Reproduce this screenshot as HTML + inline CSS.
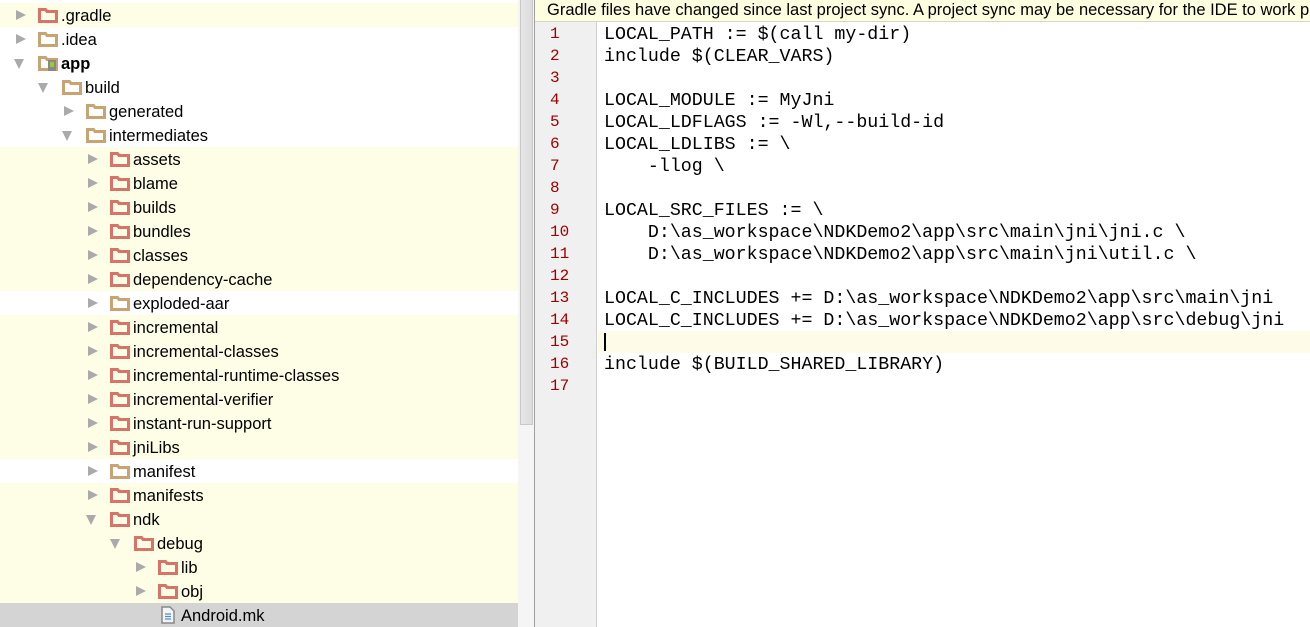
<!DOCTYPE html>
<html><head><meta charset="utf-8"><style>
*{margin:0;padding:0;box-sizing:border-box}
body{width:1310px;height:627px;overflow:hidden;background:#fff;position:relative;font-family:"Liberation Sans",sans-serif}
#tree{position:absolute;left:0;top:0;width:518px;height:627px;background:#fff}
.row{position:absolute;left:0;width:518px;height:24px;font-size:16.5px;color:#000}
.y{background:#fefee6}
.sel{background:#d4d4d4}
.arr{position:absolute;top:7px;width:0;height:0}
.ar{border-left:10px solid #aaa;border-top:5.5px solid transparent;border-bottom:5.5px solid transparent}
.ad{border-top:10px solid #aaa;border-left:5.5px solid transparent;border-right:5.5px solid transparent;top:8px}
.fold{position:absolute;top:5px;width:20px;height:15px}
.lbl{position:absolute;top:4px;line-height:18px}
#sb{position:absolute;left:518px;top:0;width:16px;height:627px;background:#f5f5f5}
#thumb{position:absolute;left:520px;top:0;width:13px;height:425px;background:linear-gradient(90deg,#e6e6e6,#dcdcdc);border:1px solid #c8c8c8;border-top:none}
#b1{position:absolute;left:534px;top:0;width:1px;height:627px;background:#a0a0a0}
#banner{position:absolute;left:535px;top:0;width:775px;height:22px;background:#fdfde0;border-bottom:1px solid #d8d8c0;font-size:16.5px;line-height:18px;padding-left:12px;padding-top:1px;white-space:nowrap;overflow:hidden}
#gut{position:absolute;left:535px;top:22px;width:62px;height:605px;background:#f0f0f0;border-right:1px solid #d0d0d0}
.ln{position:absolute;left:15px;color:#a00000;font:16px "Liberation Mono",monospace;line-height:22px;margin-top:1px}
.cl{position:absolute;left:604px;font:18.3px "Liberation Mono",monospace;line-height:22px;color:#000;white-space:pre;margin-top:2px}
#hl{position:absolute;left:598px;top:331px;width:712px;height:22px;background:#fefce8}
#cur{position:absolute;left:604px;top:333px;width:2px;height:18px;background:#000}
</style></head><body>
<div id="tree">
<div class="row y" style="top:3px"><div class="arr ar" style="left:16px"></div><svg class="fold" style="left:38px" viewBox="0 0 20 15"><path d="M1.5 1.5h6l1.5 2h9.5v10h-17z" fill="none" stroke="#d9736a" stroke-width="3"/></svg><span class="lbl" style="left:61px">.gradle</span></div>
<div class="row" style="top:27px"><div class="arr ar" style="left:16px"></div><svg class="fold" style="left:38px" viewBox="0 0 20 15"><path d="M1.5 1.5h6l1.5 2h9.5v10h-17z" fill="none" stroke="#c9a472" stroke-width="3"/></svg><span class="lbl" style="left:61px">.idea</span></div>
<div class="row" style="top:51px"><div class="arr ad" style="left:14px"></div><svg class="fold" style="left:38px" viewBox="0 0 20 15"><path d="M1.5 1.5h6l1.5 2h9.5v10h-17z" fill="none" stroke="#c9a472" stroke-width="3"/><rect x="10" y="4" width="8" height="11" fill="#888"/><rect x="12" y="6" width="4" height="5" fill="#9c3"/></svg><span class="lbl" style="left:61px;font-weight:bold">app</span></div>
<div class="row" style="top:75px"><div class="arr ad" style="left:38px"></div><svg class="fold" style="left:62px" viewBox="0 0 20 15"><path d="M1.5 1.5h6l1.5 2h9.5v10h-17z" fill="none" stroke="#c9a472" stroke-width="3"/></svg><span class="lbl" style="left:85px">build</span></div>
<div class="row" style="top:99px"><div class="arr ar" style="left:64px"></div><svg class="fold" style="left:86px" viewBox="0 0 20 15"><path d="M1.5 1.5h6l1.5 2h9.5v10h-17z" fill="none" stroke="#c9a472" stroke-width="3"/></svg><span class="lbl" style="left:109px">generated</span></div>
<div class="row" style="top:123px"><div class="arr ad" style="left:62px"></div><svg class="fold" style="left:86px" viewBox="0 0 20 15"><path d="M1.5 1.5h6l1.5 2h9.5v10h-17z" fill="none" stroke="#c9a472" stroke-width="3"/></svg><span class="lbl" style="left:109px">intermediates</span></div>
<div class="row y" style="top:147px"><div class="arr ar" style="left:88px"></div><svg class="fold" style="left:110px" viewBox="0 0 20 15"><path d="M1.5 1.5h6l1.5 2h9.5v10h-17z" fill="none" stroke="#d9736a" stroke-width="3"/></svg><span class="lbl" style="left:133px">assets</span></div>
<div class="row y" style="top:171px"><div class="arr ar" style="left:88px"></div><svg class="fold" style="left:110px" viewBox="0 0 20 15"><path d="M1.5 1.5h6l1.5 2h9.5v10h-17z" fill="none" stroke="#d9736a" stroke-width="3"/></svg><span class="lbl" style="left:133px">blame</span></div>
<div class="row y" style="top:195px"><div class="arr ar" style="left:88px"></div><svg class="fold" style="left:110px" viewBox="0 0 20 15"><path d="M1.5 1.5h6l1.5 2h9.5v10h-17z" fill="none" stroke="#d9736a" stroke-width="3"/></svg><span class="lbl" style="left:133px">builds</span></div>
<div class="row y" style="top:219px"><div class="arr ar" style="left:88px"></div><svg class="fold" style="left:110px" viewBox="0 0 20 15"><path d="M1.5 1.5h6l1.5 2h9.5v10h-17z" fill="none" stroke="#d9736a" stroke-width="3"/></svg><span class="lbl" style="left:133px">bundles</span></div>
<div class="row y" style="top:243px"><div class="arr ar" style="left:88px"></div><svg class="fold" style="left:110px" viewBox="0 0 20 15"><path d="M1.5 1.5h6l1.5 2h9.5v10h-17z" fill="none" stroke="#d9736a" stroke-width="3"/></svg><span class="lbl" style="left:133px">classes</span></div>
<div class="row y" style="top:267px"><div class="arr ar" style="left:88px"></div><svg class="fold" style="left:110px" viewBox="0 0 20 15"><path d="M1.5 1.5h6l1.5 2h9.5v10h-17z" fill="none" stroke="#d9736a" stroke-width="3"/></svg><span class="lbl" style="left:133px">dependency-cache</span></div>
<div class="row" style="top:291px"><div class="arr ar" style="left:88px"></div><svg class="fold" style="left:110px" viewBox="0 0 20 15"><path d="M1.5 1.5h6l1.5 2h9.5v10h-17z" fill="none" stroke="#c9a472" stroke-width="3"/></svg><span class="lbl" style="left:133px">exploded-aar</span></div>
<div class="row y" style="top:315px"><div class="arr ar" style="left:88px"></div><svg class="fold" style="left:110px" viewBox="0 0 20 15"><path d="M1.5 1.5h6l1.5 2h9.5v10h-17z" fill="none" stroke="#d9736a" stroke-width="3"/></svg><span class="lbl" style="left:133px">incremental</span></div>
<div class="row y" style="top:339px"><div class="arr ar" style="left:88px"></div><svg class="fold" style="left:110px" viewBox="0 0 20 15"><path d="M1.5 1.5h6l1.5 2h9.5v10h-17z" fill="none" stroke="#d9736a" stroke-width="3"/></svg><span class="lbl" style="left:133px">incremental-classes</span></div>
<div class="row y" style="top:363px"><div class="arr ar" style="left:88px"></div><svg class="fold" style="left:110px" viewBox="0 0 20 15"><path d="M1.5 1.5h6l1.5 2h9.5v10h-17z" fill="none" stroke="#d9736a" stroke-width="3"/></svg><span class="lbl" style="left:133px">incremental-runtime-classes</span></div>
<div class="row y" style="top:387px"><div class="arr ar" style="left:88px"></div><svg class="fold" style="left:110px" viewBox="0 0 20 15"><path d="M1.5 1.5h6l1.5 2h9.5v10h-17z" fill="none" stroke="#d9736a" stroke-width="3"/></svg><span class="lbl" style="left:133px">incremental-verifier</span></div>
<div class="row y" style="top:411px"><div class="arr ar" style="left:88px"></div><svg class="fold" style="left:110px" viewBox="0 0 20 15"><path d="M1.5 1.5h6l1.5 2h9.5v10h-17z" fill="none" stroke="#d9736a" stroke-width="3"/></svg><span class="lbl" style="left:133px">instant-run-support</span></div>
<div class="row y" style="top:435px"><div class="arr ar" style="left:88px"></div><svg class="fold" style="left:110px" viewBox="0 0 20 15"><path d="M1.5 1.5h6l1.5 2h9.5v10h-17z" fill="none" stroke="#d9736a" stroke-width="3"/></svg><span class="lbl" style="left:133px">jniLibs</span></div>
<div class="row" style="top:459px"><div class="arr ar" style="left:88px"></div><svg class="fold" style="left:110px" viewBox="0 0 20 15"><path d="M1.5 1.5h6l1.5 2h9.5v10h-17z" fill="none" stroke="#c9a472" stroke-width="3"/></svg><span class="lbl" style="left:133px">manifest</span></div>
<div class="row y" style="top:483px"><div class="arr ar" style="left:88px"></div><svg class="fold" style="left:110px" viewBox="0 0 20 15"><path d="M1.5 1.5h6l1.5 2h9.5v10h-17z" fill="none" stroke="#d9736a" stroke-width="3"/></svg><span class="lbl" style="left:133px">manifests</span></div>
<div class="row y" style="top:507px"><div class="arr ad" style="left:86px"></div><svg class="fold" style="left:110px" viewBox="0 0 20 15"><path d="M1.5 1.5h6l1.5 2h9.5v10h-17z" fill="none" stroke="#d9736a" stroke-width="3"/></svg><span class="lbl" style="left:133px">ndk</span></div>
<div class="row y" style="top:531px"><div class="arr ad" style="left:110px"></div><svg class="fold" style="left:134px" viewBox="0 0 20 15"><path d="M1.5 1.5h6l1.5 2h9.5v10h-17z" fill="none" stroke="#d9736a" stroke-width="3"/></svg><span class="lbl" style="left:157px">debug</span></div>
<div class="row y" style="top:555px"><div class="arr ar" style="left:136px"></div><svg class="fold" style="left:158px" viewBox="0 0 20 15"><path d="M1.5 1.5h6l1.5 2h9.5v10h-17z" fill="none" stroke="#d9736a" stroke-width="3"/></svg><span class="lbl" style="left:181px">lib</span></div>
<div class="row y" style="top:579px"><div class="arr ar" style="left:136px"></div><svg class="fold" style="left:158px" viewBox="0 0 20 15"><path d="M1.5 1.5h6l1.5 2h9.5v10h-17z" fill="none" stroke="#d9736a" stroke-width="3"/></svg><span class="lbl" style="left:181px">obj</span></div>
<div class="row sel" style="top:603px"><svg style="position:absolute;left:161px;top:3px" width="14" height="18" viewBox="0 0 14 18"><path d="M1 1h8l4 4v12H1z" fill="#f4f4f4" stroke="#888" stroke-width="1.5"/><path d="M4 8h6M4 10.5h6M4 13h6" stroke="#4a8fd0" stroke-width="1.2"/></svg><span class="lbl" style="left:181px">Android.mk</span></div>
</div>
<div id="sb"></div><div id="thumb"></div><div id="b1"></div>
<div id="banner">Gradle files have changed since last project sync. A project sync may be necessary for the IDE to work properly.</div>
<div id="hl"></div>
<div id="gut">
<div class="ln" style="top:0">1</div><div class="ln" style="top:22px">2</div><div class="ln" style="top:44px">3</div><div class="ln" style="top:66px">4</div><div class="ln" style="top:88px">5</div><div class="ln" style="top:110px">6</div><div class="ln" style="top:132px">7</div><div class="ln" style="top:154px">8</div><div class="ln" style="top:176px">9</div><div class="ln" style="top:198px">10</div><div class="ln" style="top:220px">11</div><div class="ln" style="top:242px">12</div><div class="ln" style="top:264px">13</div><div class="ln" style="top:286px">14</div><div class="ln" style="top:308px">15</div><div class="ln" style="top:330px">16</div><div class="ln" style="top:352px">17</div>
</div>
<div class="cl" style="top:22px">LOCAL_PATH := $(call my-dir)</div>
<div class="cl" style="top:44px">include $(CLEAR_VARS)</div>
<div class="cl" style="top:88px">LOCAL_MODULE := MyJni</div>
<div class="cl" style="top:110px">LOCAL_LDFLAGS := -Wl,--build-id</div>
<div class="cl" style="top:132px">LOCAL_LDLIBS := \</div>
<div class="cl" style="top:154px">    -llog \</div>
<div class="cl" style="top:198px">LOCAL_SRC_FILES := \</div>
<div class="cl" style="top:220px">    D:\as_workspace\NDKDemo2\app\src\main\jni\jni.c \</div>
<div class="cl" style="top:242px">    D:\as_workspace\NDKDemo2\app\src\main\jni\util.c \</div>
<div class="cl" style="top:286px">LOCAL_C_INCLUDES += D:\as_workspace\NDKDemo2\app\src\main\jni</div>
<div class="cl" style="top:308px">LOCAL_C_INCLUDES += D:\as_workspace\NDKDemo2\app\src\debug\jni</div>
<div class="cl" style="top:352px">include $(BUILD_SHARED_LIBRARY)</div>
<div id="cur"></div>
</body></html>
